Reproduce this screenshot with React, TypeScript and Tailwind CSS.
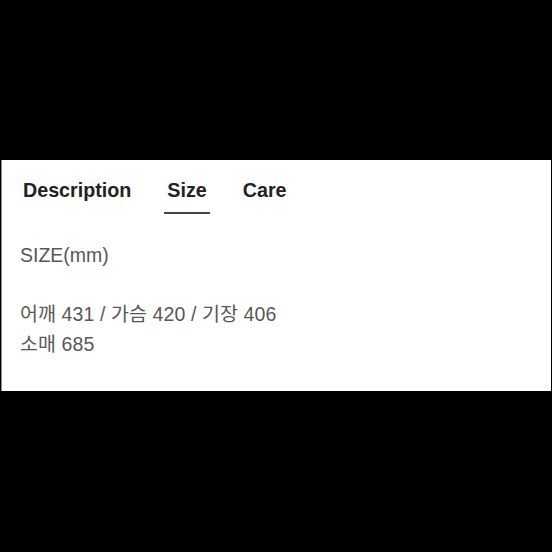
export default function App() {
  const tabs = ['Description', 'Size', 'Care'];
  const active = 'Size';

  return (
    <div
      className="w-[552px] h-[552px] bg-black pt-[160px]"
      style={{ fontFamily: '"Liberation Sans", "Noto Sans CJK KR", sans-serif' }}
    >
      <div className="ml-[1px] mr-[1px] h-[231px] bg-white border-l border-[#8a8a8a] pl-[18px] pt-[18px]">
        <div className="flex gap-[30px]">
          {tabs.map((t) => (
            <div
              key={t}
              className={
                'px-[3px] pb-[10px] text-[19.7px] leading-[24px] font-bold text-[#222] border-b-2 ' +
                (t === active ? 'border-[#444]' : 'border-transparent')
              }
            >
              {t}
            </div>
          ))}
        </div>
        <div className="mt-[27px] text-[19.5px] leading-[29.5px] text-[#575757]">
          <p>SIZE(mm)</p>
          <p>&nbsp;</p>
          <p className="tracking-[0.1px]">어깨 431 / 가슴 420 / 기장 406</p>
          <p className="tracking-[0.1px]">소매 685</p>
        </div>
      </div>
    </div>
  );
}
